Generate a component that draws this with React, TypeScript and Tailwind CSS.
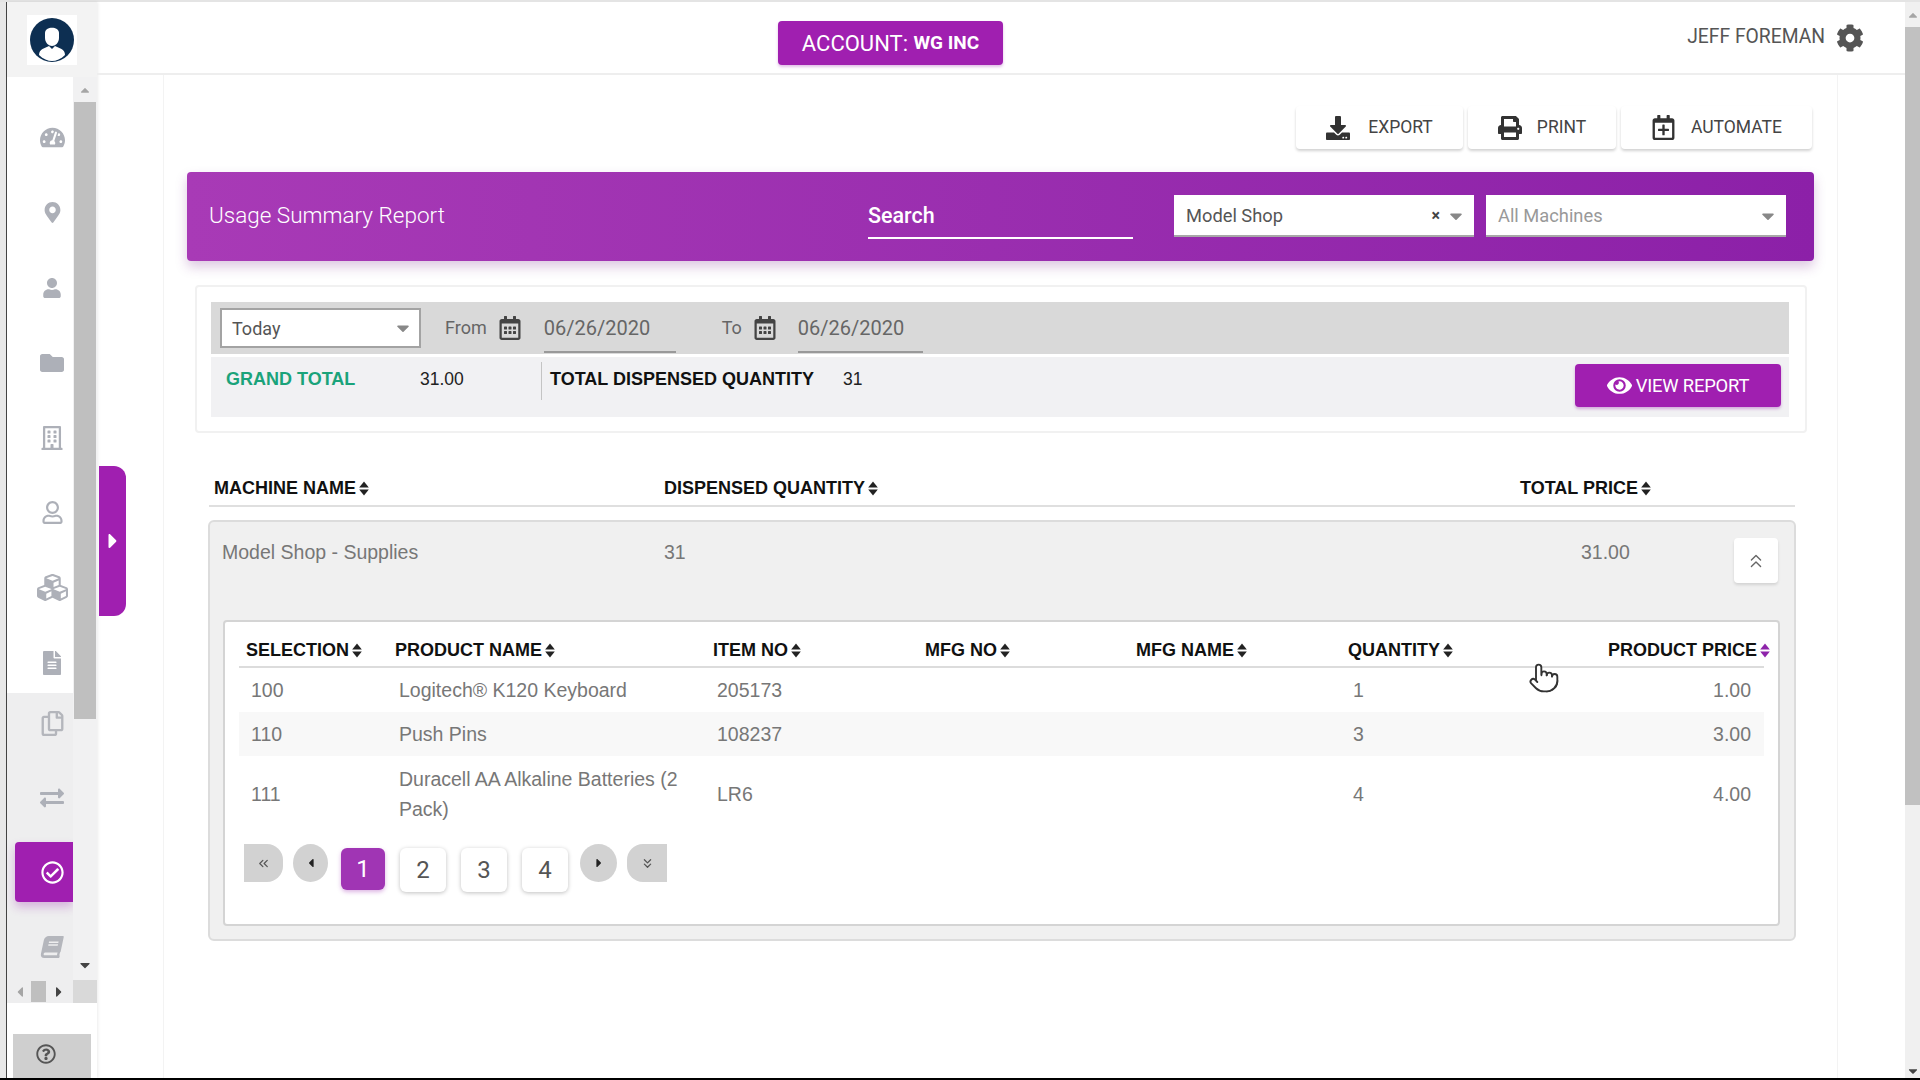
import {
  FaBook,
  FaCaretLeft,
  FaCaretRight,
  FaCaretUp,
  FaCaretDown,
  FaCog,
  FaCubes,
  FaDownload,
  FaExchangeAlt,
  FaEye,
  FaFileAlt,
  FaFolder,
  FaMapMarkerAlt,
  FaPrint,
  FaRegBuilding,
  FaRegCalendarAlt,
  FaRegCalendarPlus,
  FaRegCheckCircle,
  FaRegCopy,
  FaRegQuestionCircle,
  FaRegUser,
  FaTachometerAlt,
  FaUser,
} from "react-icons/fa";
import { ChevronsDown, ChevronsLeft, ChevronsUp, Pointer } from "lucide-react";

const navTop = [
  { Icon: FaTachometerAlt, cls: "text-[25px]" },
  { Icon: FaMapMarkerAlt, cls: "text-[21px]" },
  { Icon: FaUser, cls: "text-[20px]" },
  { Icon: FaFolder, cls: "text-[24px]" },
  { Icon: FaRegBuilding, cls: "text-[24px]" },
  { Icon: FaRegUser, cls: "text-[23px]" },
  { Icon: FaCubes, cls: "text-[31px]" },
  { Icon: FaFileAlt, cls: "text-[24px]" },
];

const rows = [
  { sel: "100", name: "Logitech® K120 Keyboard", item: "205173", qty: "1", price: "1.00", h: "h-[44px]", bg: "" },
  { sel: "110", name: "Push Pins", item: "108237", qty: "3", price: "3.00", h: "h-[44px]", bg: "bg-[#f8f8f8]" },
  { sel: "111", name: "Duracell AA Alkaline Batteries (2 Pack)", item: "LR6", qty: "4", price: "4.00", h: "h-[75px]", bg: "" },
];

function Sort({ active }: { active?: boolean }) {
  return (
    <svg width="10" height="15" viewBox="0 0 10 15" className="ml-[3px] inline-block shrink-0">
      <path d="M5 0.5 L9.8 6.5 H0.2 Z" fill={active ? "#8e24aa" : "#222"} />
      <path d="M0.2 8.5 H9.8 L5 14.5 Z" fill={active ? "#8e24aa" : "#222"} />
    </svg>
  );
}

function Head({ label, active }: { label: string; active?: boolean }) {
  return (
    <span className="flex items-center font-['Liberation_Sans',sans-serif] text-[18px] font-bold text-[#111]">
      {label}
      <Sort active={active} />
    </span>
  );
}

function Caret({ color }: { color: string }) {
  return <FaCaretDown className={`text-[20px] ${color}`} />;
}

function ToolButton({ icon, label, w }: { icon: React.ReactNode; label: string; w: string }) {
  return (
    <button className={`flex h-[43px] ${w} items-center justify-center gap-[15px] rounded bg-white text-[17.5px] text-[#444] shadow-[0_2px_3px_rgba(0,0,0,0.18)]`}>
      {icon}
      {label}
    </button>
  );
}

function PageNumber({ n, active }: { n: string; active?: boolean }) {
  return (
    <button
      className={
        active
          ? "flex h-[42px] w-[44px] items-center justify-center rounded-md bg-[#a035b4] text-[24px] text-white shadow-[0_2px_4px_rgba(156,39,176,0.35)]"
          : "flex h-[44px] w-[46px] items-center justify-center rounded-md bg-white text-[24px] text-[#555] shadow-[0_1px_4px_rgba(0,0,0,0.25)]"
      }
    >
      {n}
    </button>
  );
}

export default function App() {
  return (
    <div className="relative flex h-screen w-full flex-col overflow-hidden bg-white font-['Roboto',sans-serif]">
      <div className="h-[2px] shrink-0 bg-[#e4e4e4]" />
      <div className="flex min-h-0 flex-1">
        {/* left edge */}
        <div className="w-[6px] shrink-0 bg-[#e8e8e8]" />
        <div className="w-[1px] shrink-0 bg-[#444]" />

        {/* sidebar */}
        <aside className="flex w-[90px] shrink-0 flex-col bg-white shadow-[1px_0_3px_rgba(0,0,0,0.08)]">
          <div className="flex h-[75px] shrink-0 items-center justify-center bg-[#f3f3f3]">
            <div className="flex h-[50px] w-[50px] items-center justify-center bg-white">
              <svg width="44" height="44" viewBox="0 0 44 44">
                <circle cx="22" cy="22" r="22" fill="#0d2f52" />
                <path d="M15 15 C15 8 29 8 29 15 V20 C29 25 25 28 22 28 C19 28 15 25 15 20 Z" fill="#fff" />
                <path d="M9 37 C9 31 15 30 19 28 L22 31 L25 28 C29 30 35 31 35 37 C31 41 26 43 22 43 C18 43 13 41 9 37 Z" fill="#fff" />
              </svg>
            </div>
          </div>
          <div className="flex h-[903px] shrink-0">
            <div className="flex w-[66px] shrink-0 flex-col">
              <div className="flex h-[616px] shrink-0 flex-col items-center bg-white pt-[23px]">
                {navTop.map(({ Icon, cls }, i) => (
                  <div key={i} className="flex h-[75px] w-full shrink-0 items-center justify-center pl-[24px] text-[#adb0b8]">
                    <Icon className={cls} />
                  </div>
                ))}
              </div>
              <div className="flex flex-1 flex-col bg-[#eeeeef]">
                <div className="flex h-[60px] items-center justify-center pl-[24px] text-[#b4b6bc]">
                  <FaRegCopy className="text-[25px]" />
                </div>
                <div className="flex h-[89px] items-center justify-center pl-[24px] text-[#adb0b8]">
                  <FaExchangeAlt className="text-[24px]" />
                </div>
                <div className="ml-[8px] flex h-[60px] shrink-0 items-center justify-center rounded-l bg-[#a01fb0] pl-[16px] text-white shadow-[0_5px_10px_rgba(156,39,176,0.3)]">
                  <FaRegCheckCircle className="text-[23px]" />
                </div>
                <div className="flex h-[90px] items-center justify-center pl-[24px] text-[#b4b6bc]">
                  <FaBook className="-skew-x-12 text-[22px]" />
                </div>
              </div>
            </div>
            {/* inner vertical scrollbar */}
            <div className="flex w-[24px] shrink-0 flex-col items-center bg-[#f1f1f2]">
              <div className="flex h-[25px] shrink-0 items-center justify-center text-[#a5a5a5]">
                <FaCaretUp className="text-[14px]" />
              </div>
              <div className="h-[617px] w-[22px] shrink-0 bg-[#bfbfbf]" />
              <div className="flex-1" />
              <div className="flex h-[30px] shrink-0 items-center justify-center text-[#444]">
                <FaCaretDown className="text-[16px]" />
              </div>
            </div>
          </div>
          <div className="flex h-[23px] shrink-0 bg-[#eeeeef]">
            <div className="flex w-[66px] items-center pl-[5px]">
              <FaCaretLeft className="text-[16px] text-[#a5a5a5]" />
              <div className="ml-[3px] h-[21px] w-[15px] bg-[#bfbfbf]" />
              <FaCaretRight className="ml-[5px] text-[16px] text-[#444]" />
            </div>
            <div className="flex-1 bg-[#d9d9d9]" />
          </div>
          <div className="flex flex-1 items-end justify-center bg-white">
            <div className="flex h-[44px] w-[78px] items-center justify-center bg-[#cfcfcf] pr-[12px] pb-[4px] text-[#555]">
              <FaRegQuestionCircle className="text-[20px]" />
            </div>
          </div>
        </aside>

        {/* main */}
        <main className="flex min-w-0 flex-1 flex-col">
          <header className="flex h-[73px] shrink-0 items-center border-b-2 border-[#eeeeee] pr-[41px] pl-[681px]">
            <div className="mt-[11px] flex h-[44px] w-[225px] items-center justify-center rounded bg-[#a01fb0] text-[22px] text-white shadow-[0_2px_3px_rgba(156,39,176,0.3)]">
              ACCOUNT:&nbsp;<b className="text-[19px]">WG INC</b>
            </div>
            <span className="ml-auto text-[19.3px] text-[#555]">JEFF FOREMAN</span>
            <FaCog className="ml-[11px] text-[28px] text-[#555]" />
          </header>

          <div className="flex min-h-0 flex-1">
            <div className="w-[66px] shrink-0" />
            <div className="flex w-[1675px] shrink-0 flex-col border-x border-[#f3f3f3]">
              <div className="flex justify-end gap-[5px] pt-[31px] pr-[25px]">
                <ToolButton w="w-[167px]" label="EXPORT" icon={<FaDownload className="mr-[3px] text-[24px] text-[#333]" />} />
                <ToolButton w="w-[148px]" label="PRINT" icon={<FaPrint className="text-[24px] text-[#333]" />} />
                <ToolButton w="w-[191px]" label="AUTOMATE" icon={<FaRegCalendarPlus className="text-[25px] text-[#333]" />} />
              </div>

              <section className="mt-[23px] ml-[23px] flex h-[89px] w-[1627px] shrink-0 items-center rounded bg-gradient-to-r from-[#a83ab6] to-[#8c20a8] pl-[22px] shadow-[0_6px_12px_rgba(120,40,140,0.25)]">
                <h1 className="w-[659px] -translate-y-[1px] text-[22.5px] font-light text-white">Usage Summary Report</h1>
                <div className="flex h-[44px] w-[265px] items-center border-b-2 border-white pt-[2px] text-[21.5px] font-medium text-white">Search</div>
                <div className="ml-[41px] flex h-[42px] w-[300px] -translate-y-[1px] items-center border-b-2 border-[#a8a8a8] bg-white pt-[3px] pr-[8px] pl-[12px] text-[18.3px] text-[#555]">
                  Model Shop
                  <span className="mr-[6px] ml-auto text-[16px] font-bold text-[#444]">×</span>
                  <Caret color="text-[#888]" />
                </div>
                <div className="ml-[12px] flex h-[42px] w-[300px] -translate-y-[1px] items-center justify-between border-b-2 border-[#a8a8a8] bg-white pt-[3px] pr-[8px] pl-[12px] text-[18.3px] text-[#999]">
                  All Machines
                  <Caret color="text-[#888]" />
                </div>
              </section>

              <section className="mt-[24px] ml-[31px] flex h-[148px] w-[1612px] shrink-0 flex-col rounded border-2 border-[#f1f1f1] pt-[15px] pr-[16px] pl-[14px]">
                <div className="flex h-[52px] shrink-0 items-center bg-[#d9d9d9] pl-[9px] text-[18px] text-[#666]">
                  <div className="flex h-[40px] w-[201px] items-center justify-between border-2 border-[#a3a3a3] bg-white pr-[6px] pl-[10px] text-[#555]">
                    Today
                    <Caret color="text-[#888]" />
                  </div>
                  <span className="ml-[24px] -translate-y-[1px]">From</span>
                  <FaRegCalendarAlt className="ml-[11px] text-[24px] text-[#444]" />
                  <div className="ml-[22px] flex h-[50px] w-[132px] items-center border-b-2 border-[#999] pt-[2px] text-[20px] text-[#666]">06/26/2020</div>
                  <span className="ml-[46px] -translate-y-[1px]">To</span>
                  <FaRegCalendarAlt className="ml-[11px] text-[24px] text-[#444]" />
                  <div className="ml-[21px] flex h-[50px] w-[125px] items-center border-b-2 border-[#999] pt-[2px] text-[20px] text-[#666]">06/26/2020</div>
                </div>
                <div className="mt-[3px] flex h-[60px] shrink-0 bg-[#f1f1f3] pl-[15px] font-['Liberation_Sans',sans-serif]">
                  <div className="flex h-[45px] w-[194px] items-center text-[18px] font-bold text-[#1aa37a]">GRAND TOTAL</div>
                  <div className="flex h-[45px] w-[121px] items-center text-[17.5px] text-[#222]">31.00</div>
                  <div className="mt-[5px] h-[38px] w-px bg-[#c4c4c4]" />
                  <div className="ml-[8px] flex h-[45px] w-[293px] items-center text-[18px] font-bold text-[#111]">TOTAL DISPENSED QUANTITY</div>
                  <div className="flex h-[45px] items-center text-[17.5px] text-[#222]">31</div>
                  <button className="mt-[7px] mr-[8px] ml-auto flex h-[43px] w-[206px] items-center justify-center gap-[4px] rounded bg-[#a01fb0] font-['Roboto',sans-serif] text-[18.4px] tracking-[-0.2px] text-white shadow-[0_2px_3px_rgba(156,39,176,0.35)]">
                    <FaEye className="text-[25px]" />
                    VIEW REPORT
                  </button>
                </div>
              </section>

              {/* machines table */}
              <div className="mt-[41px] ml-[45px] flex h-[33px] w-[1586px] shrink-0 items-center border-b-2 border-[#dfdfdf] pb-[3px] pl-[5px]">
                <div className="w-[450px]"><Head label="MACHINE NAME" /></div>
                <div className="w-[856px]"><Head label="DISPENSED QUANTITY" /></div>
                <Head label="TOTAL PRICE" />
              </div>

              <section className="mt-[13px] ml-[44px] flex h-[421px] w-[1588px] shrink-0 flex-col rounded-md border-2 border-[#dcdcdc] bg-[#f0f0f0] px-[13px] font-['Liberation_Sans',sans-serif]">
                <div className="flex h-[98px] shrink-0 pt-[16px] text-[19.5px] text-[#777]">
                  <div className="-ml-[1px] w-[442px]">Model Shop - Supplies</div>
                  <div className="w-[917px]">31</div>
                  <div>31.00</div>
                  <button className="mr-[3px] ml-auto flex h-[45px] w-[44px] items-center justify-center rounded bg-white text-[#666] shadow-[0_2px_3px_rgba(0,0,0,0.12)]">
                    <ChevronsUp className="h-[22px] w-[22px]" strokeWidth={1.5} />
                  </button>
                </div>
                <div className="flex h-[306px] w-[1557px] shrink-0 flex-col rounded border-2 border-[#d4d4d4] bg-white px-[14px]">
                  <div className="grid h-[46px] shrink-0 grid-cols-[149px_318px_212px_211px_212px_1fr_auto] items-center border-b-2 border-[#dcdcdc] pt-[12px] pl-[7px]">
                    <Head label="SELECTION" />
                    <Head label="PRODUCT NAME" />
                    <Head label="ITEM NO" />
                    <Head label="MFG NO" />
                    <Head label="MFG NAME" />
                    <Head label="QUANTITY" />
                    <div className="-mr-[6px]">
                      <Head label="PRODUCT PRICE" active />
                    </div>
                  </div>
                  {rows.map((r) => (
                    <div
                      key={r.sel}
                      className={`grid ${r.h} shrink-0 grid-cols-[149px_318px_212px_211px_212px_1fr_auto] items-center pl-[7px] text-[19.5px] leading-[30px] text-[#777] ${r.bg}`}
                    >
                      <div className="pl-[5px]">{r.sel}</div>
                      <div className="pr-[20px] pl-[4px]">{r.name}</div>
                      <div className="pl-[4px]">{r.item}</div>
                      <div />
                      <div />
                      <div className="pl-[5px]">{r.qty}</div>
                      <div className="pr-[13px] text-right">{r.price}</div>
                    </div>
                  ))}
                  <div className="mt-[13px] flex items-start pl-[5px] font-['Roboto',sans-serif]">
                    <button className="flex h-[38px] w-[39px] items-center justify-center rounded-r-[16px] bg-[#d2d2d2] text-[#555]">
                      <ChevronsLeft className="h-[15px] w-[15px]" strokeWidth={2} />
                    </button>
                    <button className="ml-[10px] flex h-[38px] w-[35px] items-center justify-center rounded-[50%] bg-[#d2d2d2] text-[14px] text-[#222]">
                      <FaCaretLeft />
                    </button>
                    <div className="mt-[4px] ml-[13px] flex gap-[15px]">
                      <PageNumber n="1" active />
                      <PageNumber n="2" />
                      <PageNumber n="3" />
                      <PageNumber n="4" />
                    </div>
                    <button className="ml-[12px] flex h-[38px] w-[37px] items-center justify-center rounded-[50%] bg-[#d2d2d2] text-[14px] text-[#222]">
                      <FaCaretRight />
                    </button>
                    <button className="ml-[10px] flex h-[38px] w-[40px] items-center justify-center rounded-l-[16px] bg-[#d2d2d2] text-[#555]">
                      <ChevronsDown className="h-[15px] w-[15px]" strokeWidth={2} />
                    </button>
                  </div>
                </div>
              </section>
            </div>
          </div>
        </main>

        {/* page scrollbar */}
        <div className="flex w-[15px] shrink-0 flex-col items-center bg-[#f0f0f0]">
          <div className="flex h-[25px] shrink-0 items-center justify-center text-[#a5a5a5]">
            <FaCaretUp className="text-[14px]" />
          </div>
          <div className="h-[778px] w-full shrink-0 bg-[#c1c1c1]" />
          <div className="flex-1" />
          <FaCaretDown className="text-[14px] text-[#444]" />
        </div>
      </div>
      <div className="h-[2px] shrink-0 bg-black" />

      {/* collapse tab */}
      <button className="absolute top-[466px] left-[99px] flex h-[150px] w-[27px] items-center justify-center rounded-r-xl bg-[#a01fb0] text-[24px] text-white">
        <FaCaretRight />
      </button>
      {/* mouse pointer in the capture */}
      <Pointer className="absolute top-[662px] left-[1528px] h-[32px] w-[32px] fill-white text-[#333]" strokeWidth={1.4} />
    </div>
  );
}
